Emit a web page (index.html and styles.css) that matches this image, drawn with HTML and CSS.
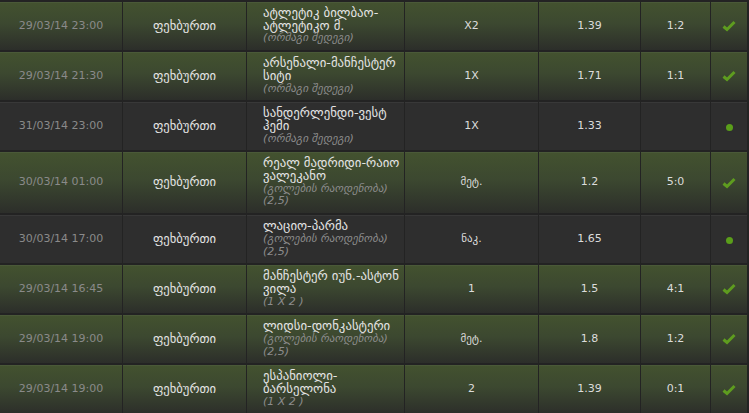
FILE: index.html
```html
<!DOCTYPE html>
<html lang="ka">
<head>
<meta charset="utf-8">
<link rel="stylesheet" href="styles.css">
</head>
<body>
<div class="bets">
  <div class="row won">
    <div class="cell c-date">29/03/14 23:00</div>
    <div class="cell c-sport">ფეხბურთი</div>
    <div class="cell c-match"><span class="teams">ატლეტიკ ბილბაო-ატლეტიკო მ.</span><span class="sub">(ორმაგი შედეგი)</span></div>
    <div class="cell c-bet">X2</div>
    <div class="cell c-odd">1.39</div>
    <div class="cell c-score">1:2</div>
    <div class="cell c-stat"><svg class="check" viewBox="0 0 14 12" width="14" height="12"><path d="M1.5 6.5 L5 9.5 L12.5 2" /></svg></div>
  </div>
  <div class="row won">
    <div class="cell c-date">29/03/14 21:30</div>
    <div class="cell c-sport">ფეხბურთი</div>
    <div class="cell c-match"><span class="teams">არსენალი-მანჩესტერ სიტი</span><span class="sub">(ორმაგი შედეგი)</span></div>
    <div class="cell c-bet">1X</div>
    <div class="cell c-odd">1.71</div>
    <div class="cell c-score">1:1</div>
    <div class="cell c-stat"><svg class="check" viewBox="0 0 14 12" width="14" height="12"><path d="M1.5 6.5 L5 9.5 L12.5 2" /></svg></div>
  </div>
  <div class="row pending">
    <div class="cell c-date">31/03/14 23:00</div>
    <div class="cell c-sport">ფეხბურთი</div>
    <div class="cell c-match"><span class="teams">სანდერლენდი-ვესტ ჰემი</span><span class="sub">(ორმაგი შედეგი)</span></div>
    <div class="cell c-bet">1X</div>
    <div class="cell c-odd">1.33</div>
    <div class="cell c-score"></div>
    <div class="cell c-stat"><span class="dot"></span></div>
  </div>
  <div class="row won">
    <div class="cell c-date">30/03/14 01:00</div>
    <div class="cell c-sport">ფეხბურთი</div>
    <div class="cell c-match"><span class="teams">რეალ მადრიდი-რაიო ვალეკანო</span><span class="sub">(გოლების რაოდენობა) (2,5)</span></div>
    <div class="cell c-bet">მეტ.</div>
    <div class="cell c-odd">1.2</div>
    <div class="cell c-score">5:0</div>
    <div class="cell c-stat"><svg class="check" viewBox="0 0 14 12" width="14" height="12"><path d="M1.5 6.5 L5 9.5 L12.5 2" /></svg></div>
  </div>
  <div class="row pending">
    <div class="cell c-date">30/03/14 17:00</div>
    <div class="cell c-sport">ფეხბურთი</div>
    <div class="cell c-match"><span class="teams">ლაციო-პარმა</span><span class="sub">(გოლების რაოდენობა) (2,5)</span></div>
    <div class="cell c-bet">ნაკ.</div>
    <div class="cell c-odd">1.65</div>
    <div class="cell c-score"></div>
    <div class="cell c-stat"><span class="dot"></span></div>
  </div>
  <div class="row won">
    <div class="cell c-date">29/03/14 16:45</div>
    <div class="cell c-sport">ფეხბურთი</div>
    <div class="cell c-match"><span class="teams">მანჩესტერ იუნ.-ასტონ ვილა</span><span class="sub">(1 X 2 )</span></div>
    <div class="cell c-bet">1</div>
    <div class="cell c-odd">1.5</div>
    <div class="cell c-score">4:1</div>
    <div class="cell c-stat"><svg class="check" viewBox="0 0 14 12" width="14" height="12"><path d="M1.5 6.5 L5 9.5 L12.5 2" /></svg></div>
  </div>
  <div class="row won">
    <div class="cell c-date">29/03/14 19:00</div>
    <div class="cell c-sport">ფეხბურთი</div>
    <div class="cell c-match"><span class="teams">ლიდსი-დონკასტერი</span><span class="sub">(გოლების რაოდენობა) (2,5)</span></div>
    <div class="cell c-bet">მეტ.</div>
    <div class="cell c-odd">1.8</div>
    <div class="cell c-score">1:2</div>
    <div class="cell c-stat"><svg class="check" viewBox="0 0 14 12" width="14" height="12"><path d="M1.5 6.5 L5 9.5 L12.5 2" /></svg></div>
  </div>
  <div class="row won">
    <div class="cell c-date">29/03/14 19:00</div>
    <div class="cell c-sport">ფეხბურთი</div>
    <div class="cell c-match"><span class="teams">ესპანიოლი-ბარსელონა</span><span class="sub">(1 X 2 )</span></div>
    <div class="cell c-bet">2</div>
    <div class="cell c-odd">1.39</div>
    <div class="cell c-score">0:1</div>
    <div class="cell c-stat"><svg class="check" viewBox="0 0 14 12" width="14" height="12"><path d="M1.5 6.5 L5 9.5 L12.5 2" /></svg></div>
  </div>
</div>
</body>
</html>
```

FILE: styles.css
```css
html, body {
  margin: 0;
  padding: 0;
  background: #232323;
  height: 100%;
  overflow: hidden;
}
body {
  font-family: "DejaVu Sans", sans-serif;
  font-size: 11px;
  line-height: 12.7px;
  color: #dcdcdc;
}
.bets {
  display: flex;
  flex-direction: column;
  gap: 2px;
  padding-top: 2px;
}
.row {
  display: flex;
  gap: 1px;
}
.cell {
  box-sizing: border-box;
  padding: 5px 4px;
  display: flex;
  align-items: center;
  justify-content: center;
  text-align: center;
  flex: none;
}
.won .cell {
  background: linear-gradient(to bottom, #43522f 0%, #3c4830 45%, #2c2e2a 100%);
  box-shadow: inset 0 1px 0 #4a5938;
}
.pending .cell {
  background: #2e2e2e;
  box-shadow: inset 0 1px 0 #383838;
}
.c-date { width: 122px; color: #8a8a8a; }
.c-sport { width: 123px; color: #e4e4e4; font-size: 12.6px; }
.c-match {
  width: 157px;
  text-align: left;
  padding: 5px 4px 5px 16px;
  flex-direction: column;
  justify-content: center;
  align-items: flex-start;
  color: #e4e4e4;
}
.teams { font-size: 12.8px; }
.sub { font-style: italic; color: #8c8c8c; }
.c-bet { width: 133px; }
.c-odd { width: 101px; }
.c-score { width: 69px; }
.c-stat { width: 36px; }
.check path {
  fill: none;
  stroke: #5e9c1f;
  stroke-width: 3;
  stroke-linecap: butt;
  stroke-linejoin: miter;
}
.dot {
  width: 7px;
  height: 7px;
  border-radius: 50%;
  background: #5a9e1a;
  margin-top: 2px;
}
```
